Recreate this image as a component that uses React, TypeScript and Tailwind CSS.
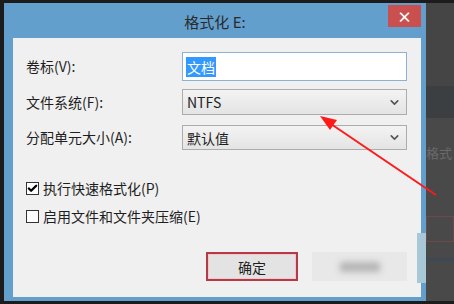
import { Check, ChevronDown } from 'lucide-react';

const font = { fontFamily: '"Microsoft YaHei", "Noto Sans CJK SC", "Noto Sans", sans-serif' };

function Select({ value, className }: { value: string; className: string }) {
  return (
    <div
      className={`flex items-center justify-between pl-[4px] pr-[5px] border border-[#acacac] bg-gradient-to-b from-[#f3f3f3] to-[#e4e4e4] text-[14px] text-[#1e1e1e] ${className}`}
    >
      <span className="leading-none">{value}</span>
      <ChevronDown className="w-[13px] h-[13px] text-[#555]" strokeWidth={3} />
    </div>
  );
}

function CheckBox({ checked, label }: { checked: boolean; label: string }) {
  return (
    <label className="flex items-center gap-[4px] text-[14px] text-[#1e1e1e] leading-none">
      <span className="w-[13px] h-[13px] border border-[#333] bg-white flex items-center justify-center">
        {checked && <Check className="w-[11px] h-[11px] text-black" strokeWidth={5} />}
      </span>
      {label}
    </label>
  );
}

export default function App() {
  return (
    <div className="relative w-[454px] h-[304px] overflow-hidden bg-[#444444] flex flex-col" style={font}>
      <div className="h-[3px] bg-[#1c1c1c] shrink-0" />
      <div className="flex flex-1 min-h-0">
        <div className="w-[4px] bg-[#1c1c1c]" />

        {/* dialog frame */}
        <div className="w-[422px] flex flex-col bg-[#629fcd]">
          <div className="relative h-[35px] flex items-center justify-center shrink-0">
            <span className="text-[15px] text-[#2a2a2a] leading-none pt-[2px]">格式化 E:</span>
            <button className="absolute top-[2px] right-[5px] w-[33px] h-[22px] bg-[#c9504e] flex items-center justify-center text-white text-[15px] font-bold leading-none">
              ×
            </button>
          </div>

          <div className="relative flex-1 ml-[9px] mr-[5px] mb-[4px] bg-[#f0f0f0] flex flex-col pl-[13px] pr-[14px] pt-[14px]">
            <div className="flex items-center justify-between h-[29px]">
              <span className="text-[14px] text-[#1e1e1e]">卷标(V):</span>
              <div className="w-[225px] h-[29px] bg-white border border-[#8db1d3] flex items-center pl-[3px]">
                <span className="bg-[#3399ff] text-white text-[14px] px-[1px] leading-[20px]">文档</span>
              </div>
            </div>

            <div className="flex items-center justify-between mt-[8px]">
              <span className="text-[14px] text-[#1e1e1e]">文件系统(F):</span>
              <Select value="NTFS" className="w-[225px] h-[26px]" />
            </div>

            <div className="flex items-center justify-between mt-[10px]">
              <span className="text-[14px] text-[#1e1e1e]">分配单元大小(A):</span>
              <Select value="默认值" className="w-[225px] h-[25px]" />
            </div>

            <div className="flex flex-col gap-[14px] mt-[31px]">
              <CheckBox checked label="执行快速格式化(P)" />
              <CheckBox checked={false} label="启用文件和文件夹压缩(E)" />
            </div>

            <div className="flex justify-end gap-[14px] mt-[29px]">
              <button className="w-[92px] h-[29px] border-2 border-[#b53a48] bg-[#e3e3e3] text-[14px] text-[#1e1e1e] leading-none flex items-center justify-center shadow-[inset_0_0_0_1px_#f0c8cc]">
                确定
              </button>
              <div className="w-[95px] h-[29px] bg-[#e8e8e8] flex items-center justify-center">
                <div className="w-[40px] h-[10px] bg-[#b5b5b5] blur-[3px]" />
              </div>
            </div>
          </div>
        </div>

        {/* background window */}
        <div className="flex-1 flex flex-col">
          <div className="h-[83px] bg-[#454545]" />
          <div className="h-[32px] bg-[#3b3f42]" />
          <div className="flex-1 bg-[#494949] flex flex-col">
            <span className="mt-[28px] text-[13px] text-[#6a6a6a] leading-none whitespace-nowrap">格式</span>
            <div className="mt-[57px] h-[26px] border border-[#6b4a4e]" />
            <div className="mt-[16px] h-[3px] bg-[#3d4a55]" />
          </div>
        </div>
      </div>
      <div className="h-[3px] bg-[#1c1c1c] shrink-0" />

      {/* overlay artifact */}
      <div className="absolute left-[417px] top-[233px] w-[9px] h-[50px] bg-[#a8c8d8]" />

      {/* red arrow */}
      <svg className="absolute inset-0 pointer-events-none" width="454" height="304">
        <line x1="436" y1="195" x2="331" y2="124" stroke="#ff1a1a" strokeWidth="2" />
        <polygon points="320,116 337,120 330,130" fill="#ff1a1a" />
      </svg>
    </div>
  );
}
